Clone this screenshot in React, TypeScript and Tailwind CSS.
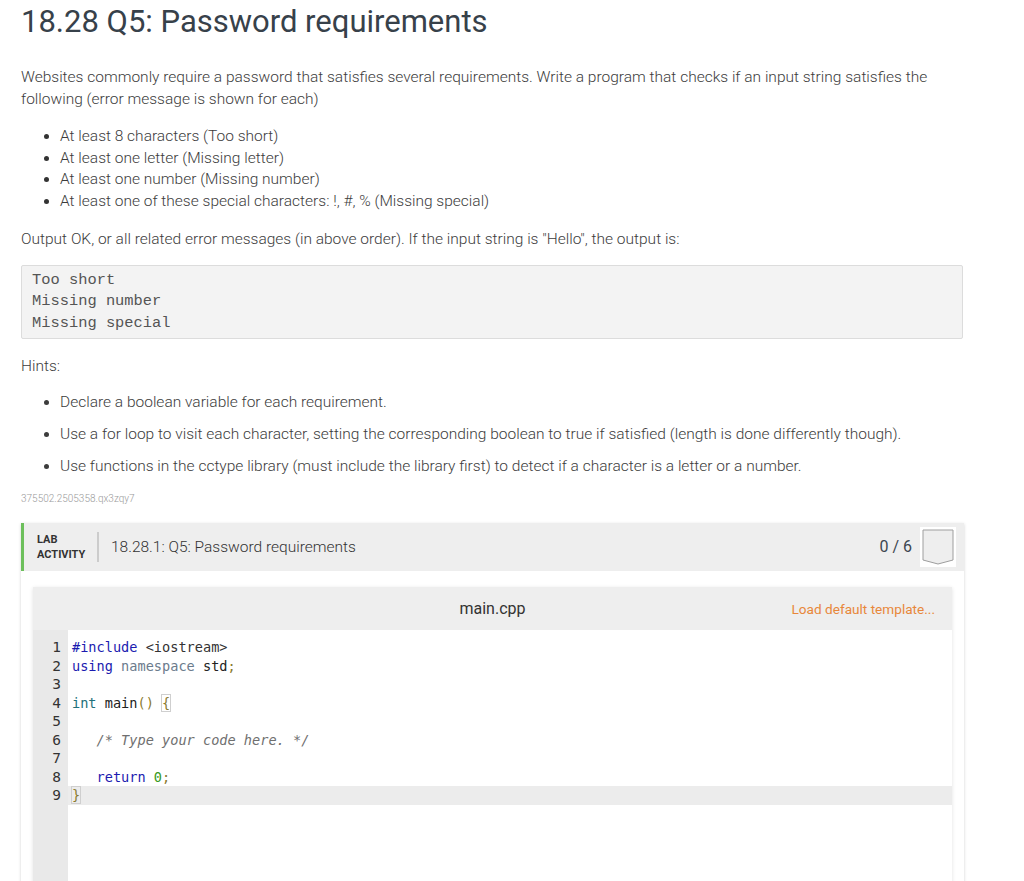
import React from 'react'

const Badge = () => (
  <svg width="36" height="40" viewBox="0 0 36 40" className="block">
    <rect x="0" y="0" width="36" height="40" fill="#ffffff" />
    <path d="M3 3 H33 V33 L18 37 L3 33 Z" fill="#eeeeee" stroke="#9e9e9e" strokeWidth="1" />
  </svg>
)

const codeLines: React.ReactNode[] = [
  <><span className="text-[#1b1bb0]">#include</span> <span className="text-[#333]">&lt;iostream&gt;</span></>,
  <><span className="text-[#1b1bb0]">using</span> <span className="text-[#6b7b8c]">namespace</span> <span className="text-[#222]">std</span><span className="text-[#8a7a2e]">;</span></>,
  <>&nbsp;</>,
  <><span className="text-[#22707a]">int</span> <span className="text-[#222]">main</span><span className="text-[#8a7a2e]">()</span> <span className="text-[#8a7a2e] outline outline-1 outline-[#cfcfcf]">{'{'}</span></>,
  <>&nbsp;</>,
  <><span className="text-[#6f6f6f] italic">{'   /* Type your code here. */'}</span></>,
  <>&nbsp;</>,
  <><span className="text-[#1b1bb0]">{'   return'}</span> <span className="text-[#3a9a22]">0</span><span className="text-[#8a7a2e]">;</span></>,
  <><span className="text-[#8a7a2e] outline outline-1 outline-[#cfcfcf]">{'}'}</span></>,
]

const App = () => {
  return (
    <main className="w-[1024px] h-[881px] overflow-hidden bg-white font-['Roboto',sans-serif] text-[#3c3c3c]">
      <div className="pl-[21px] pr-[61px] pt-[4px]">
        <h1 className="text-[31px] leading-[36px] text-[#37414a] font-normal">18.28 Q5: Password requirements</h1>

        <p className="mt-[26px] text-[15.5px] leading-[22px] font-light">
          Websites commonly require a password that satisfies several requirements. Write a program that checks if an input string satisfies the following (error message is shown for each)
        </p>

        <ul className="mt-[16px] pl-[39px] list-disc text-[15.5px] leading-[21.7px] font-light marker:text-[#333]">
          <li>At least 8 characters (Too short)</li>
          <li>At least one letter (Missing letter)</li>
          <li>At least one number (Missing number)</li>
          <li>At least one of these special characters: !, #, % (Missing special)</li>
        </ul>

        <p className="mt-[15px] text-[15.5px] leading-[22px] font-light">
          Output OK, or all related error messages (in above order). If the input string is "Hello", the output is:
        </p>

        <pre className="mt-[15px] bg-[#f3f3f3] border border-[#dcdcdc] rounded-[2px] px-[10px] py-[4px] font-['Liberation_Mono',monospace] text-[15.4px] leading-[21.5px] text-[#555]">
{`Too short
Missing number
Missing special`}
        </pre>

        <p className="mt-[16px] text-[15.5px] leading-[22px] font-light">Hints:</p>

        <ul className="mt-[14px] pl-[39px] list-disc text-[15.5px] leading-[22px] font-light flex flex-col gap-[10px]">
          <li>Declare a boolean variable for each requirement.</li>
          <li>Use a for loop to visit each character, setting the corresponding boolean to true if satisfied (length is done differently though).</li>
          <li>Use functions in the cctype library (must include the library first) to detect if a character is a letter or a number.</li>
        </ul>

        <div className="mt-[15px] text-[10px] leading-[14px] font-light text-[#9a9a9a]">375502.2505358.qx3zqy7</div>

        <section className="mt-[17px] w-[943px] bg-white shadow-[0_1px_3px_rgba(0,0,0,0.18)]">
          <div className="h-[48px] bg-[#eeeeee] border-l-[3px] border-[#6cbf5b] flex items-center pl-[13px] pr-[8px]">
            <div className="text-[11px] leading-[15px] font-bold text-[#333] w-[47px]">
              LAB<br />ACTIVITY
            </div>
            <div className="ml-[13px] w-[2px] h-[30px] bg-[#cccccc]" />
            <div className="ml-[12px] text-[15.5px] font-light text-[#333]">18.28.1: Q5: Password requirements</div>
            <div className="ml-auto text-[16px] text-[#3c4650] mr-[8px]">0 / 6</div>
            <Badge />
          </div>

          <div className="px-[12px] pt-[16px]">
            <div className="shadow-[0_1px_4px_rgba(0,0,0,0.12)]">
              <div className="h-[43px] bg-[#eeeeee] flex items-center relative">
                <div className="flex-1 text-center text-[16px] text-[#333]">main.cpp</div>
                <div className="absolute right-[17px] text-[13.6px] text-[#e8873a]">Load default template...</div>
              </div>
              <div className="flex bg-white h-[300px] font-['DejaVu_Sans_Mono',monospace] text-[13.6px] leading-[18.5px]">
                <div className="w-[35px] bg-[#e9e9e9] pt-[8px] pr-[7px] text-right text-[14.5px] text-[#333]">
                  {codeLines.map((_, i) => (
                    <div key={i} className="h-[18.5px]">{i + 1}</div>
                  ))}
                </div>
                <div className="flex-1 pt-[8px]">
                  {codeLines.map((line, i) => (
                    <div key={i} className={`h-[18.5px] pl-[4px] whitespace-pre ${i === 8 ? 'bg-[#ececec]' : ''}`}>{line}</div>
                  ))}
                </div>
              </div>
            </div>
          </div>
        </section>
      </div>
    </main>
  )
}

export default App
